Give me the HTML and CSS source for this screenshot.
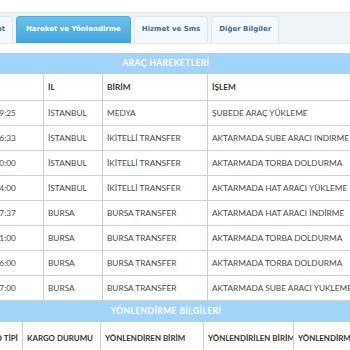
FILE: index.html
```html
<!DOCTYPE html>
<html lang="tr">
<head>
    <meta charset="UTF-8">
    <meta name="viewport" content="width=device-width, initial-scale=1.0">
    <title>Kargo Detay</title>
    <link rel="stylesheet" href="styles.css">
</head>
<body>
<div class="viewport">
    <div class="page">
        <ul class="tabs">
            <li class="tab first">Fiyat</li>
            <li class="tab active">Hareket ve Yönlendirme</li>
            <li class="tab">Hizmet ve Sms</li>
            <li class="tab">Diğer Bilgiler</li>
        </ul>

        <div class="section-title first-title">ARAÇ HAREKETLERİ</div>
        <table class="grid moves">
            <colgroup>
                <col style="width:110px">
                <col style="width:59px">
                <col style="width:105px">
                <col>
            </colgroup>
            <thead>
                <tr><th>TARİH</th><th>İL</th><th>BİRİM</th><th>İŞLEM</th></tr>
            </thead>
            <tbody>
                <tr><td>12.03.2024 09:25</td><td>İSTANBUL</td><td>MEDYA</td><td>ŞUBEDE ARAÇ YÜKLEME</td></tr>
                <tr><td>12.03.2024 16:33</td><td>İSTANBUL</td><td>İKİTELLİ TRANSFER</td><td>AKTARMADA SUBE ARACI INDIRME</td></tr>
                <tr><td>12.03.2024 20:00</td><td>İSTANBUL</td><td>İKİTELLİ TRANSFER</td><td>AKTARMADA TORBA DOLDURMA</td></tr>
                <tr><td>12.03.2024 24:00</td><td>İSTANBUL</td><td>İKİTELLİ TRANSFER</td><td>AKTARMADA HAT ARACI YÜKLEME</td></tr>
                <tr><td>13.03.2024 07:37</td><td>BURSA</td><td>BURSA TRANSFER</td><td>AKTARMADA HAT ARACI İNDİRME</td></tr>
                <tr><td>13.03.2024 11:00</td><td>BURSA</td><td>BURSA TRANSFER</td><td>AKTARMADA TORBA DOLDURMA</td></tr>
                <tr><td>13.03.2024 16:00</td><td>BURSA</td><td>BURSA TRANSFER</td><td>AKTARMADA TORBA DOLDURMA</td></tr>
                <tr><td>13.03.2024 17:00</td><td>BURSA</td><td>BURSA TRANSFER</td><td>AKTARMADA SUBE ARACI YUKLEME</td></tr>
            </tbody>
        </table>

        <div class="section-title">YÖNLENDİRME BİLGİLERİ</div>
        <table class="grid routes">
            <colgroup>
                <col style="width:89px">
                <col style="width:78px">
                <col style="width:103px">
                <col style="width:90px">
                <col>
            </colgroup>
            <thead>
                <tr><th>KARGO TİPİ</th><th>KARGO DURUMU</th><th>YÖNLENDİREN BİRİM</th><th>YÖNLENDİRİLEN BİRİM</th><th>YÖNLENDİRME TARİHİ</th></tr>
            </thead>
        </table>
    </div>
</div>
</body>
</html>
```

FILE: styles.css
```css
body {
	margin: 0;
	padding: 0;
	background-color: #fff;
	color: #4a4a4a;
	font-family: Lato, "Open Sans", sans-serif;
}

/* the screenshot is scrolled sideways, so the page sits a bit to the left */
.viewport {
	width: 350px;
	overflow: hidden;
}

.page {
	width: 466px;
	margin-left: -67px;
	padding-top: 12px;
}

.tabs {
	list-style: none;
	margin: 0;
	padding: 3px 0 0 0;
	display: flex;
	gap: 3px;
	background-color: #eef4f8;
	border-top: 1px solid #dfe5ea;
	border-bottom: 1px solid #e3eaf0;
	height: 27px;
}

.tab {
	font-family: "DejaVu Sans", Verdana, sans-serif;
	font-size: 7px;
	font-weight: bold;
	color: #3f6f8f;
	padding: 0 7px;
	line-height: 25px;
	background-color: #f4f8fb;
	border: 1px solid #dbe5ed;
	border-bottom: none;
	border-radius: 4px 4px 0 0;
}

.tab.first {
	width: 64px;
	text-align: right;
}

.tab.active {
	padding: 0 9px;
	color: #fff;
	background: linear-gradient(#6cc0ea, #3ea4dc);
	border-color: #4aa9dd;
}

.section-title {
	background-color: #a3d3f7;
	color: #fff;
	font-size: 8.5px;
	font-weight: bold;
	text-align: center;
	line-height: 21px;
	letter-spacing: 0.4px;
}

.first-title {
	margin-top: 9px;
}

.grid {
	width: 100%;
	border-collapse: collapse;
	table-layout: fixed;
}

.grid th,
.grid td {
	border: 1px solid #cfcfcf;
	text-align: left;
	padding: 0 4px;
	font-size: 8.3px;
	white-space: nowrap;
	overflow: hidden;
}

.grid th:first-child,
.grid td:first-child {
	padding-left: 16px;
}

.grid th {
	font-weight: bold;
	color: #333;
	height: 26px;
}

.grid td {
	height: 24px;
}

.grid tr:first-child th {
	border-top: none;
}

.routes th {
	height: 32px;
	font-size: 7.9px;
}

.routes th:first-child {
	padding-left: 40px;
}
```
